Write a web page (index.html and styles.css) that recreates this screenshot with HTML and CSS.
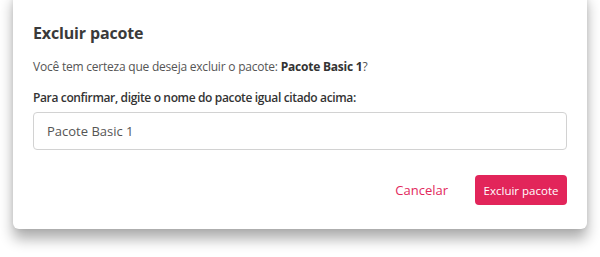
FILE: index.html
```html
<!DOCTYPE html>
<html lang="pt-BR">
<head>
<meta charset="utf-8">
<title>Excluir pacote</title>
<link rel="stylesheet" href="styles.css">
</head>
<body>
<div class="dialog">
  <h2 class="title">Excluir pacote</h2>
  <p class="message">Você tem certeza que deseja excluir o pacote: <strong>Pacote Basic 1</strong>?</p>
  <label class="label" for="nome">Para confirmar, digite o nome do pacote igual citado acima:</label>
  <input class="input" id="nome" type="text" value="Pacote Basic 1">
  <div class="actions">
    <button class="btn-cancel" type="button">Cancelar</button>
    <button class="btn-danger" type="button">Excluir pacote</button>
  </div>
</div>
</body>
</html>
```

FILE: styles.css
```css
html, body {
  margin: 0;
  padding: 0;
  background: #ffffff;
}
body {
  font-family: "Open Sans", "Noto Sans", sans-serif;
  color: #444;
  min-height: 257px;
  overflow: hidden;
}
.dialog {
  margin: -10px 13px 0 13px;
  height: 239px;
  box-sizing: border-box;
  padding: 32px 20px 0 20px;
  background: #fff;
  border-radius: 6px;
  box-shadow: 0 10px 14px rgba(0, 0, 0, 0.32), 0 0 5px rgba(0, 0, 0, 0.08);
  display: flex;
  flex-direction: column;
}
.title {
  margin: 0;
  font-size: 16px;
  font-weight: 700;
  color: #3a3a3a;
  line-height: 22px;
  letter-spacing: -0.15px;
}
.message {
  margin: 14px 0 0 0;
  font-size: 12px;
  line-height: 18px;
  color: #555;
  letter-spacing: -0.22px;
}
.message strong {
  font-weight: 700;
  color: #333;
}
.label {
  margin-top: 13px;
  font-size: 12px;
  line-height: 18px;
  font-weight: 600;
  color: #333;
  letter-spacing: -0.36px;
}
.input {
  margin-top: 5px;
  height: 38px;
  box-sizing: border-box;
  border: 1px solid #d2d2d2;
  border-radius: 4px;
  padding: 0 13px;
  font-family: inherit;
  font-size: 13px;
  color: #555;
  outline: none;
  width: 100%;
}
.actions {
  margin-top: 25px;
  display: flex;
  justify-content: flex-end;
  align-items: center;
  gap: 27px;
}
.btn-cancel {
  background: none;
  border: none;
  padding: 0;
  font-family: inherit;
  font-size: 13px;
  color: #e2285c;
  cursor: pointer;
}
.btn-danger {
  height: 30px;
  width: 92px;
  border: none;
  border-radius: 4px;
  background: #e2255a;
  color: #fff;
  font-family: inherit;
  font-size: 11.5px;
  padding: 0;
  cursor: pointer;
}
```
